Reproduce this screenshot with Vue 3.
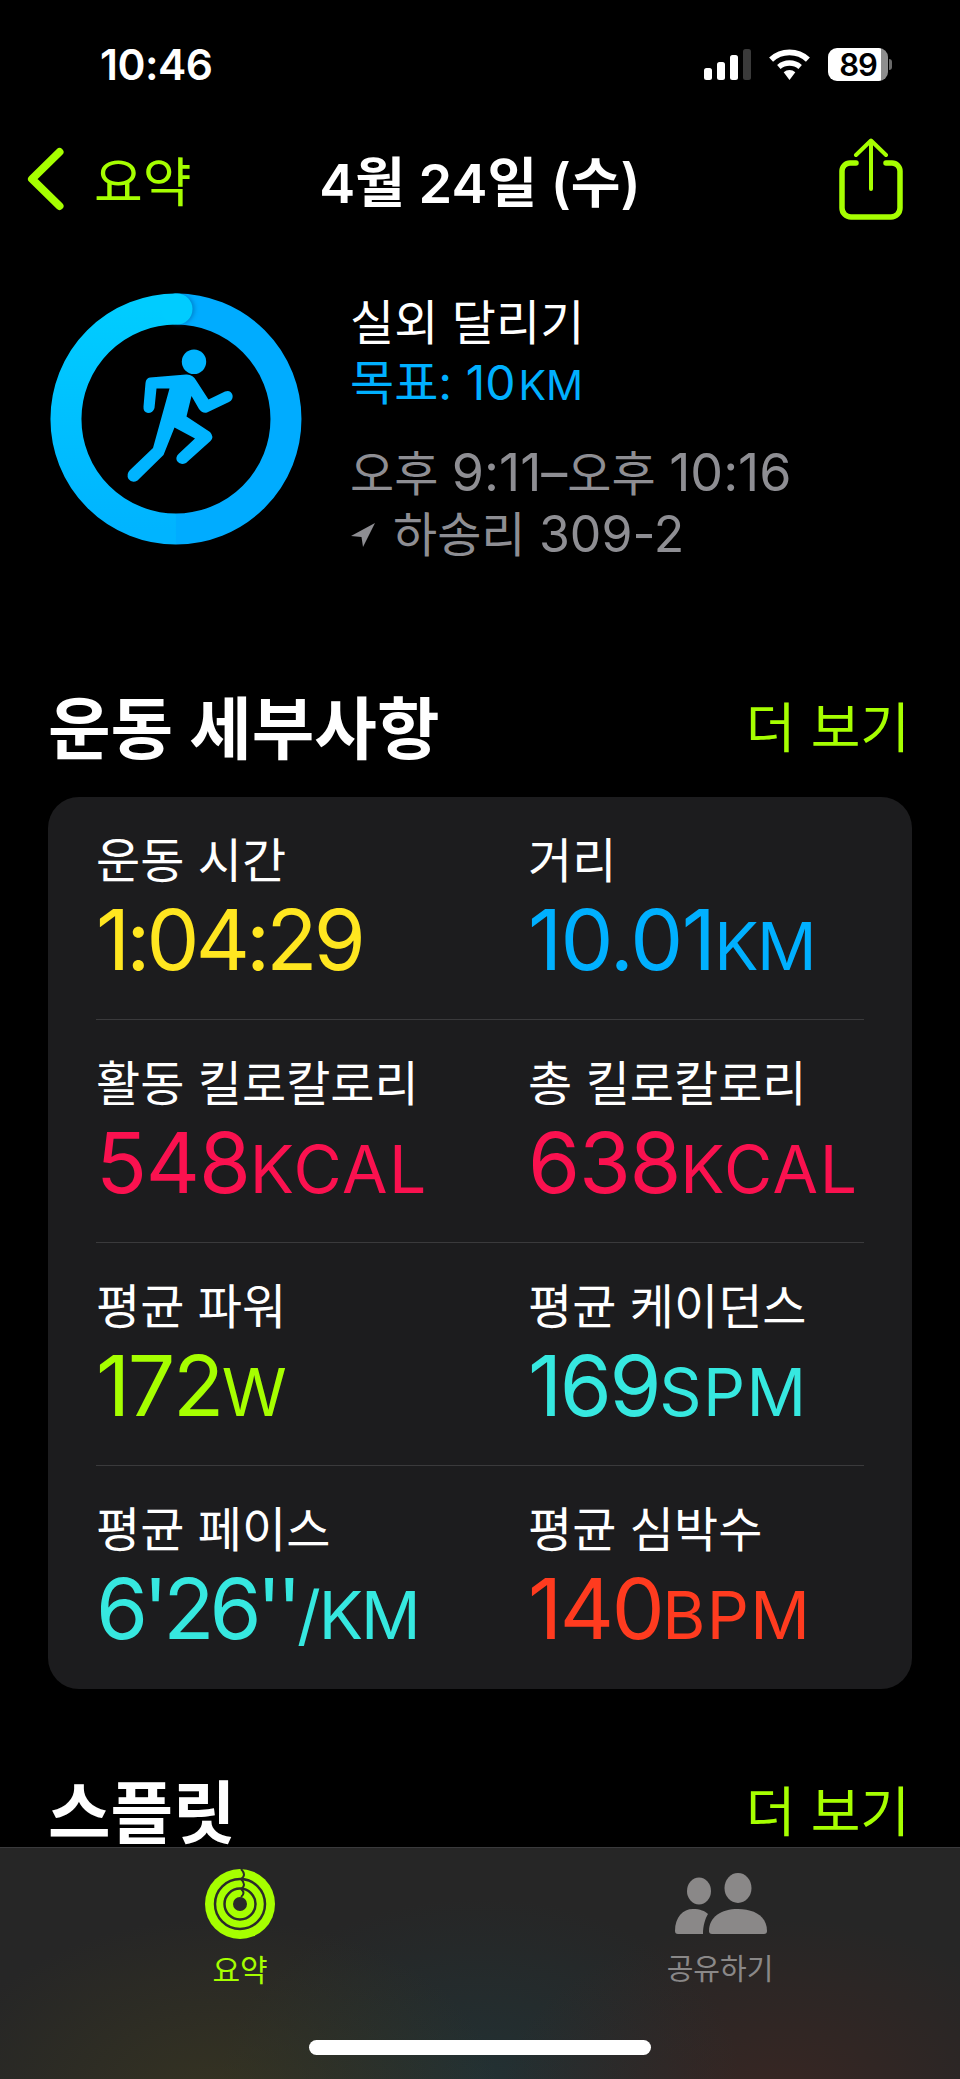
<script setup>
const stats = [
  { label: '운동 시간', value: '1:04:29', unit: '', color: '#ffe620', ls: '-3.9px', uls: '0' },
  { label: '거리', value: '10.01', unit: 'KM', color: '#00b0ff', ls: '-1.6px', uls: '-1.5px' },
  { label: '활동 킬로칼로리', value: '548', unit: 'KCAL', color: '#fa114f', ls: '-1.2px', uls: '1.6px' },
  { label: '총 킬로칼로리', value: '638', unit: 'KCAL', color: '#fa114f', ls: '-1.2px', uls: '1.6px' },
  { label: '평균 파워', value: '172', unit: 'W', color: '#a6ff00', ls: '-2.4px', uls: '0' },
  { label: '평균 케이던스', value: '169', unit: 'SPM', color: '#36e8e0', ls: '-2.4px', uls: '1.4px' },
  { label: '평균 페이스', value: "6'26''", unit: '/KM', color: '#36e8e0', ls: '-5px', uls: '-2px' },
  { label: '평균 심박수', value: '140', unit: 'BPM', color: '#ff3b1f', ls: '-2.4px', uls: '1.4px' }
]
</script>

<template>
  <div class="screen">
    <div class="status">
      <span class="time">10:46</span>
      <div class="status-icons">
        <svg width="47" height="31" viewBox="0 0 47 31">
          <rect x="0" y="19" width="8" height="12" rx="2.500" fill="#fff" />
          <rect x="13" y="13" width="8" height="18" rx="2.500" fill="#fff" />
          <rect x="26" y="6" width="8" height="25" rx="2.500" fill="#fff" />
          <rect x="39" y="0" width="8" height="31" rx="2.500" fill="#3a3a3a" />
        </svg>
        <svg width="41" height="31" viewBox="0 0 42 32">
          <path d="M2 11 A28 28 0 0 1 40 11" fill="none" stroke="#fff" stroke-width="6" />
          <path d="M10 18.500 A17 17 0 0 1 32 18.500" fill="none" stroke="#fff" stroke-width="5.500" />
          <path d="M15 24 L21 32 L27 24 A9 9 0 0 0 15 24Z" fill="#fff" />
        </svg>
        <div class="battery">
          <div class="batt-body"><span>89</span></div>
          <div class="batt-cap"></div>
        </div>
      </div>
    </div>

    <div class="nav">
      <div class="back">
        <svg width="37" height="64" viewBox="0 0 37 64">
          <path d="M32.500 5 L5 32 L32.500 59" fill="none" stroke="#a6ff00" stroke-width="8" stroke-linecap="round" stroke-linejoin="round" />
        </svg>
        <span>요약</span>
      </div>
      <div class="title">4월 24일 (수)</div>
      <svg class="share" width="64" height="82" viewBox="0 0 64 82">
        <path d="M17 25 H11 A8 8 0 0 0 3 33 V70 A9 9 0 0 0 12 79 H52 A9 9 0 0 0 61 70 V33 A8 8 0 0 0 53 25 H47" fill="none" stroke="#a6ff00" stroke-width="5.500" stroke-linecap="round" />
        <path d="M32 51 V3 M17 17 L32 2.500 L47 17" fill="none" stroke="#a6ff00" stroke-width="4" stroke-linecap="round" stroke-linejoin="round" />
      </svg>
    </div>

    <div class="workout">
      <svg class="ring" width="252" height="252" viewBox="0 0 252 252">
        <defs>
          <linearGradient id="ringGrad" x1="0" y1="0" x2="0" y2="1">
            <stop offset="0" stop-color="#00ccff" />
            <stop offset="1" stop-color="#00b4ff" />
          </linearGradient>
          <filter id="capBlur" x="-30%" y="-30%" width="160%" height="160%">
            <feGaussianBlur stdDeviation="2" />
          </filter>
        </defs>
        <path d="M126 16 A110 110 0 0 1 126 236" fill="none" stroke="#00acff" stroke-width="31" />
        <circle cx="129" cy="16" r="15.500" fill="#005a9e" opacity="0.5" filter="url(#capBlur)" />
        <path d="M126 16 A110 110 0 1 0 126 236" fill="none" stroke="url(#ringGrad)" stroke-width="31" />
        <circle cx="127" cy="16" r="15.500" fill="#00ccff" />
        <ellipse cx="144" cy="68.700" rx="12.200" ry="12.300" fill="#00b4ff" />
        <path fill="#00b4ff" d="M100 84.500 L136 81.500 Q143 81 146.500 88 L158.500 106.500 L175 98.500 Q180.500 96.500 182.500 102 Q183.500 106.500 179 109 L157 119.500 Q152 120.500 149 116 L141.500 103 L136.500 123.500 L160 139 Q164.500 144 160.500 148 L136 170 Q130 172.500 127 168 Q125 164 129 160.500 L145 145.500 L124.500 134.500 L113.500 162 L87.500 187.500 Q82 190.500 78.500 186 Q76 181 80 177 L103 155 L119.500 95.500 L106.500 95.500 L104.500 115 Q103 120 98 120 Q93 119 93.500 113.500 L95.500 90 Q96 85 100 84.500 Z" />
      </svg>
      <div class="workout-text">
        <div class="w-name">실외 달리기</div>
        <div class="w-goal">목표: <span class="num-goal">10</span><span class="small-caps">KM</span></div>
        <div class="w-time">오후 <span class="num">9:11–</span>오후 <span class="num">10:16</span></div>
        <div class="w-loc">
          <svg width="26" height="26" viewBox="0 0 26 26">
            <path d="M25 1 L1 14 L11.500 15 L13 25Z" fill="#8e8e93" />
          </svg>
          <span>하송리 <span class="num loc-num">309-2</span></span>
        </div>
      </div>
    </div>

    <div class="section-head details-head">
      <h2>운동 세부사항</h2>
      <span class="more">더 보기</span>
    </div>

    <div class="card">
      <div class="grid">
        <div v-for="s in stats" :key="s.label" class="cell">
          <div class="label">{{ s.label }}</div>
          <div class="value" :style="{ color: s.color, letterSpacing: s.ls }">{{ s.value }}<span class="unit" :style="{ letterSpacing: s.uls }">{{ s.unit }}</span></div>
        </div>
      </div>
    </div>

    <div class="section-head split-head">
      <h2>스플릿</h2>
      <span class="more">더 보기</span>
    </div>

    <div class="tabbar">
      <div class="tab active">
        <svg width="70" height="70" viewBox="0 0 70 70">
          <circle cx="35" cy="35" r="35" fill="#a6ff00" />
          <circle cx="35" cy="35" r="25" fill="none" stroke="#2a2b2a" stroke-width="2.500" />
          <circle cx="35" cy="35" r="15.500" fill="none" stroke="#2a2b2a" stroke-width="2.500" />
          <circle cx="35" cy="35" r="7" fill="#2a2b2a" />
          <path d="M36 0 Q42 6 36 10 M36 10 Q42 16 36 20 M36 20 Q41 24 36 28" fill="none" stroke="#2a2b2a" stroke-width="2" />
        </svg>
        <span>요약</span>
      </div>
      <div class="tab">
        <svg width="94" height="70" viewBox="0 0 94 70">
          <ellipse cx="26" cy="22" rx="12" ry="13.500" fill="#8a8888" />
          <ellipse cx="65" cy="19" rx="13.500" ry="15" fill="#8a8888" />
          <path d="M2 62 C2 48 10 40 20 40 C27 40 32 42 35 45 C32 50 30 57 30 65 H5 Q2 65 2 62Z" fill="#8a8888" />
          <path d="M36 62 C36 48 48 40 65 40 C82 40 94 48 94 62 Q94 65 91 65 H39 Q36 65 36 62Z" fill="#8a8888" />
        </svg>
        <span>공유하기</span>
      </div>
      <div class="home"></div>
    </div>
  </div>
</template>

<style>
html, body { margin: 0; background: #000; }
</style>

<style scoped>
.screen {
  position: relative;
  width: 960px;
  height: 2079px;
  background: #000;
  overflow: hidden;
  color: #fff;
  font-family: "Inter", "Noto Sans CJK KR", "Noto Sans", sans-serif;
  box-sizing: border-box;
}
.status {
  height: 124px;
  display: flex;
  align-items: center;
  justify-content: space-between;
  padding: 4px 68px 0 100px;
  box-sizing: border-box;
}
.time { font-size: 42.5px; font-weight: 600; letter-spacing: -0.5px; }
.status-icons { display: flex; align-items: center; gap: 18px; }
.battery { display: flex; align-items: center; gap: 1px; }
.batt-body {
  width: 60px;
  height: 33px;
  border-radius: 9px;
  background: linear-gradient(90deg, #fff 88%, #8e8e8e 88%);
  color: #000;
  display: flex;
  align-items: center;
  justify-content: center;
  font-size: 31px;
  font-weight: 600;
  letter-spacing: -1px;
  line-height: 33px;
}
.batt-cap { width: 3px; height: 11px; background: #6a6a6a; border-radius: 0 3px 3px 0; }
.nav {
  position: relative;
  height: 110px;
  display: flex;
  align-items: center;
  justify-content: space-between;
  padding: 0 57px 0 27px;
  box-sizing: border-box;
}
.back { display: flex; align-items: center; gap: 30px; color: #a6ff00; font-size: 53px; }
.title {
  position: absolute;
  left: 0;
  right: 0;
  text-align: center;
  font-size: 54px;
  font-weight: 600;
}
.workout {
  display: flex;
  align-items: flex-start;
  gap: 48px;
  padding: 59px 0 0 50px;
}
.w-name { font-size: 48px; line-height: 60px; }
.w-goal { font-size: 48px; line-height: 60px; color: #00b0ff; }
.num-goal { font-size: 48px; }
.small-caps { font-size: 41px; margin-left: 3px; }
.w-time { font-size: 48px; line-height: 60px; color: #8e8e93; margin-top: 28px; }
.num { font-size: 52px; }
.loc-num { font-size: 50px; }
.w-loc { font-size: 48px; line-height: 60px; color: #8e8e93; display: flex; align-items: center; gap: 17px; }
.section-head {
  display: flex;
  align-items: center;
  justify-content: space-between;
  padding: 0 50px 0 48px;
}
.section-head h2 { margin: 0; font-size: 68px; font-weight: 700; line-height: 80px; }
.more { color: #a6ff00; font-size: 54px; line-height: 80px; }
.details-head { margin-top: 124px; }
.split-head { margin-top: 84px; }
.card {
  margin: 28px 48px 0;
  height: 892px;
  background: #1c1c1e;
  border-radius: 31px;
  box-sizing: border-box;
  padding: 0 48px;
}
.grid {
  display: grid;
  grid-template-columns: 432px 336px;
  grid-auto-rows: 223px;
}
.cell {
  padding-top: 34px;
  box-sizing: border-box;
  border-bottom: 1px solid #3a3a3c;
  white-space: nowrap;
}
.cell:nth-last-child(-n+2) { border-bottom: none; }
.label { font-size: 48px; line-height: 60px; }
.value { font-size: 84px; line-height: 92px; margin-top: 3px; font-weight: 400; }
.unit { font-size: 66px; }
.tabbar {
  position: absolute;
  left: 0;
  right: 0;
  bottom: 0;
  height: 232px;
  border-top: 1px solid #3a3a3c;
  box-sizing: border-box;
  background:
    radial-gradient(ellipse 280px 180px at 780px 250px, rgba(70,38,32,.55), transparent),
    radial-gradient(ellipse 280px 180px at 220px 250px, rgba(68,64,30,.5), transparent),
    radial-gradient(ellipse 260px 180px at 480px 230px, rgba(32,56,60,.6), transparent),
    #262626;
  display: flex;
}
.tab {
  width: 480px;
  padding-top: 21px;
  display: flex;
  flex-direction: column;
  align-items: center;
  gap: 11px;
  height: 150px;
  color: #8a8888;
  font-size: 29px;
  line-height: 40px;
}
.tab.active { color: #a6ff00; font-size: 30px; }
.home {
  position: absolute;
  left: 309px;
  bottom: 24px;
  width: 342px;
  height: 15px;
  border-radius: 8px;
  background: #fff;
}
</style>
